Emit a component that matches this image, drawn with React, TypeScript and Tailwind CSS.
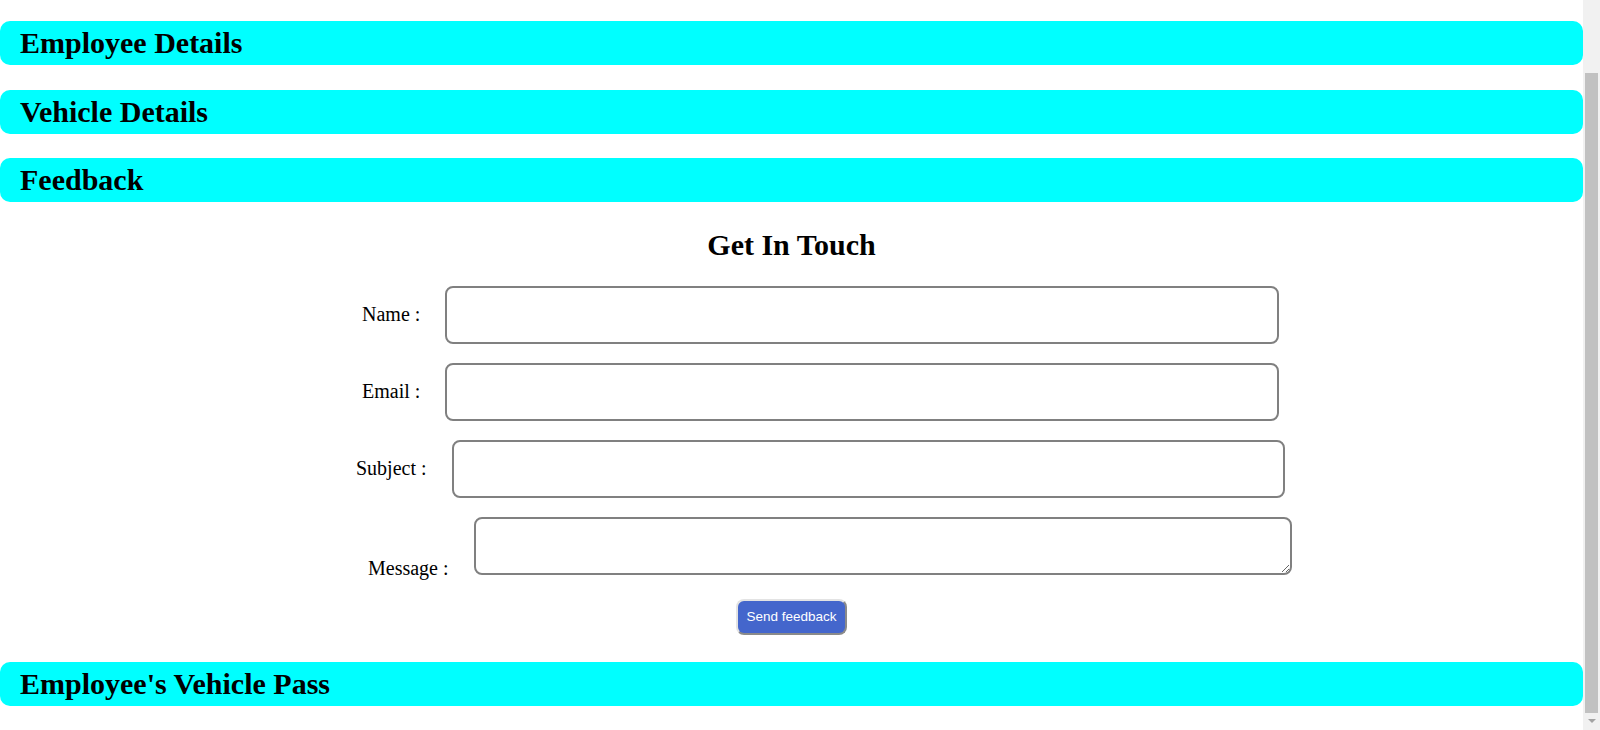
import React from 'react';

const serif = { fontFamily: '"Liberation Serif", "Times New Roman", serif' };

function SectionBar({ title }: { title: string }) {
  return (
    <div className="w-full rounded-[10px] bg-[#00ffff] py-[5px] pl-[20px]">
      <h2 className="text-[30px] font-bold leading-[34px] text-black">{title}</h2>
    </div>
  );
}

// fake scrollbar, page is shown scrolled to the bottom
function ScrollBar() {
  return (
    <div className="flex w-[17px] shrink-0 flex-col bg-[#f1f1f1]">
      <div className="h-[73px]" />
      <div className="mx-[2px] h-[640px] bg-[#c1c1c1]" />
      <div className="flex flex-1 items-center justify-center">
        <svg width="8" height="5" viewBox="0 0 8 5">
          <path d="M0 0 L8 0 L4 4 Z" fill="#a3a3a3" />
        </svg>
      </div>
    </div>
  );
}

const inputCls =
  'h-[58px] rounded-[8px] border-2 border-[#808080] bg-white px-2 text-[20px] outline-none';

export default function App() {
  return (
    <div className="flex h-[730px] w-full overflow-hidden bg-white" style={serif}>
      <div className="flex min-w-0 flex-1 flex-col pt-[21px]">
        <SectionBar title="Employee Details" />
        <div className="mt-[25px]">
          <SectionBar title="Vehicle Details" />
        </div>
        <div className="mt-[24px]">
          <SectionBar title="Feedback" />
        </div>

        {/* feedback form */}
        <form className="flex flex-col" onSubmit={(e) => e.preventDefault()}>
          <h2 className="mt-[26px] text-center text-[30px] font-bold leading-[34px] text-black">
            Get In Touch
          </h2>

          <div className="mt-[24px] flex items-center pl-[362px]">
            <label className="-mt-[2px] text-[20px] text-black">Name :</label>
            <input type="text" className={`${inputCls} ml-[25px] w-[834px]`} />
          </div>

          <div className="mt-[19px] flex items-center pl-[362px]">
            <label className="-mt-[2px] text-[20px] text-black">Email :</label>
            <input type="email" className={`${inputCls} ml-[25px] w-[834px]`} />
          </div>

          <div className="mt-[19px] flex items-center pl-[356px]">
            <label className="-mt-[2px] text-[20px] text-black">Subject :</label>
            <input type="text" className={`${inputCls} ml-[25px] w-[833px]`} />
          </div>

          <div className="mt-[19px] flex items-end pl-[368px]">
            <label className="-mb-[5px] text-[20px] leading-[24px] text-black">Message :</label>
            <textarea className={`${inputCls} ml-[25px] w-[818px]`} />
          </div>

          <div className="mt-[24px] flex justify-center">
            <button
              type="submit"
              className="h-[36px] w-[111px] rounded-[8px] border-2 border-t-[#e3e3e3] border-l-[#e3e3e3] border-r-[#8a8a8a] border-b-[#8a8a8a] bg-[#4466cc] text-[13.5px] text-white"
              style={{ fontFamily: '"Liberation Sans", Arial, sans-serif' }}
            >
              Send feedback
            </button>
          </div>
        </form>

        <div className="mt-[27px]">
          <SectionBar title="Employee's Vehicle Pass" />
        </div>
      </div>
      <ScrollBar />
    </div>
  );
}
